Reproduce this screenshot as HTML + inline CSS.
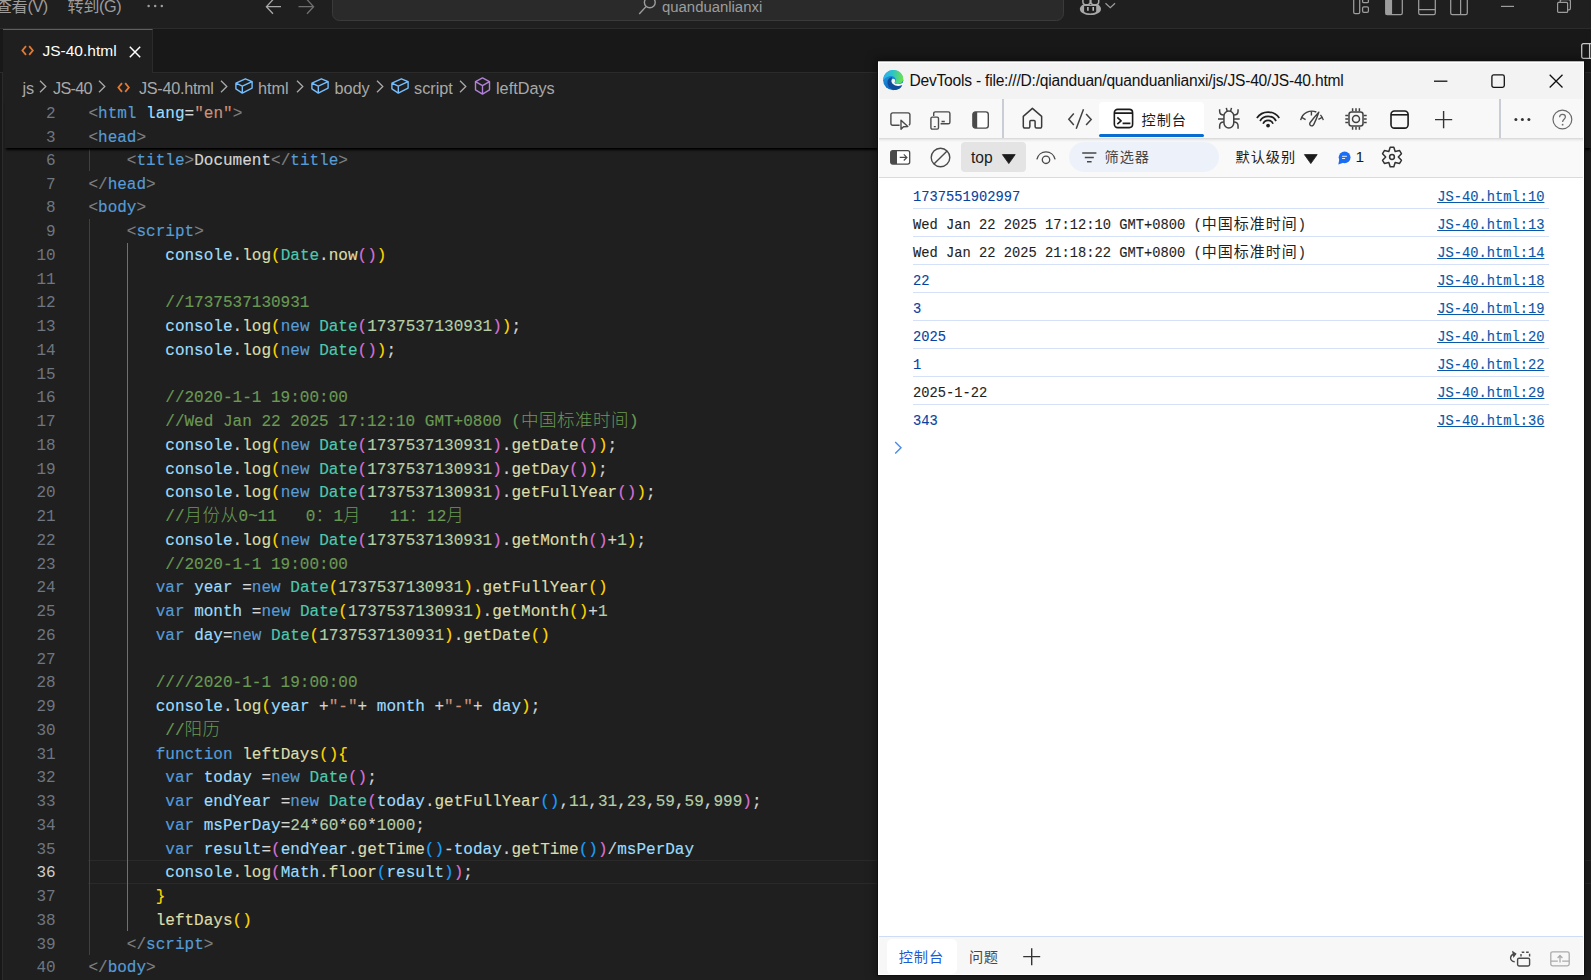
<!DOCTYPE html>
<html lang="zh-CN">
<head>
<meta charset="utf-8">
<title>JS-40.html - quanduanlianxi</title>
<style>
*{box-sizing:border-box;margin:0;padding:0}
html,body{width:1591px;height:980px;overflow:hidden;background:#1f1f1f}
body{position:relative;font-family:"Liberation Sans","Noto Sans CJK SC",sans-serif;color:#ccc}
.a{position:absolute;white-space:pre}
svg{position:absolute;overflow:visible}
/* ---------- VS Code ---------- */
#title{position:absolute;left:0;top:0;width:1591px;height:29px;background:#1f1f1f;border-bottom:1px solid #2b2b2b}
#title .menu{position:absolute;top:-4.6px;font-size:16.25px;line-height:22px;color:#9d9d9d;white-space:pre}
#cc{position:absolute;left:332px;top:-8px;width:732px;height:28.5px;border:1px solid #3a3a3a;border-radius:7.5px;background:#2a2a2a}
#tabs{position:absolute;left:0;top:29px;width:1591px;height:44px;background:#181818;border-bottom:1px solid #2b2b2b}
#side{position:absolute;left:0;top:29px;width:3px;height:951px;background:#181818;border-right:1px solid #2b2b2b}
#tab{position:absolute;left:3px;top:29px;width:149.5px;height:44px;background:#1f1f1f;border-top:1.4px solid #0078d4;border-right:1px solid #2b2b2b}
#crumbs{position:absolute;left:3px;top:73px;width:1588px;height:27px;background:#1f1f1f}
.bc{position:absolute;top:76.5px;line-height:22px;font-size:16.25px;color:#a9a9a9;white-space:pre}
#editor{position:absolute;left:3px;top:0;width:1588px;height:980px}
.row{position:absolute;left:0;width:1588px;height:23.75px;line-height:23.75px;white-space:pre;font-family:"Liberation Mono","Noto Sans CJK SC",monospace;font-size:16.03px;color:#d4d4d4}
.ln{position:absolute;left:-3px;top:2.2px;width:55.7px;text-align:right;color:#6e7681}
.ln.act{color:#ccc}
.code{position:absolute;left:85.4px;top:2.2px;-webkit-text-stroke:.15px}
.g{color:#808080}.b{color:#569cd6}.v{color:#9cdcfe}.f{color:#dcdcaa}.c{color:#4ec9b0}.n{color:#b5cea8}.s{color:#ce9178}.m{color:#6a9955}
.b1{color:#ffd700}.b2{color:#da70d6}.b3{color:#179fff}
.z{font-family:"Noto Sans CJK SC",sans-serif;font-size:17.5px;letter-spacing:.5px;line-height:0;-webkit-text-stroke:0;font-weight:300}
#sticky{position:absolute;left:2px;top:100px;width:1586px;height:47.6px;background:#1f1f1f;box-shadow:0 3px 2px -1px #000}
#sticky .row{left:-2px;margin-top:1px}
.guide{position:absolute;width:1px;background:#404040}
#curline{position:absolute;left:85px;width:1503px;height:23.75px;border-top:1.5px solid #2a2a2a;border-bottom:1.5px solid #2a2a2a}
/* ---------- DevTools window ---------- */
#dt{position:absolute;left:878px;top:61px;width:706px;height:914px;background:#fff;box-shadow:0 0 0 1px #101010,0 0 9px 3px rgba(0,0,0,.35);color:#1f1f1f;overflow:hidden}
#dt .tb{position:absolute;left:0;top:0;width:706px;height:38px;background:#f3f3f3}
#dt .tool{position:absolute;left:0;top:38px;width:706px;height:39px;background:#f8f8f8}
#dt .tshadow{position:absolute;left:0;top:76.600px;width:706px;height:4.500px;background:linear-gradient(rgba(0,0,0,.15),rgba(0,0,0,.05) 45%,rgba(0,0,0,0))}
#dt .ctool{position:absolute;left:0;top:77px;width:706px;height:40px;background:#f9f9f9;border-bottom:1.4px solid #cfdcf6}
#dt .sep{position:absolute;top:38px;width:2px;height:39px;background:#c9ced6}
.msg{position:absolute;left:35px;width:636px;height:28px;border-bottom:1.3px solid #d5e1f8;font-family:"Liberation Mono","Noto Sans CJK SC",monospace;font-size:13.75px;line-height:28px;white-space:pre;-webkit-text-stroke:.12px}
.msg .t{position:absolute;left:0;top:3px}
.msg .num{color:#0842a0}
.msg a{position:absolute;right:4.6px;top:3px;color:#0b57a8;text-decoration:underline;text-underline-offset:.8px}
.msg .zz{font-family:"Noto Sans CJK SC",sans-serif;font-size:15px;letter-spacing:1px;font-weight:400;line-height:0;-webkit-text-stroke:0}
#dt .frame{position:absolute;left:0;top:0;width:706px;height:914px;box-shadow:inset 0 0 0 1px #fff;border-top:1px solid #b4b4b4}
#drawer{position:absolute;left:0;top:875px;width:706px;height:39px;background:#f7f7f7;border-top:1.4px solid #cfdcf6}
</style>
</head>
<body>
<!-- editor body -->
<div id="editor">
<div id="curline" style="top:860.1px"></div>
<div class="guide" style="left:85.5px;top:147.6px;height:23.75px"></div>
<div class="guide" style="left:85.5px;top:218.85px;height:736.25px"></div>
<div class="guide" style="left:123.5px;top:242.6px;height:688.75px;background:#707070"></div>
<div class="row" style="top:147.60px"><span class="ln">6</span><span class="code">    <span class="g">&lt;</span><span class="b">title</span><span class="g">&gt;</span><span class="p">Document</span><span class="g">&lt;/</span><span class="b">title</span><span class="g">&gt;</span></span></div>
<div class="row" style="top:171.35px"><span class="ln">7</span><span class="code"><span class="g">&lt;/</span><span class="b">head</span><span class="g">&gt;</span></span></div>
<div class="row" style="top:195.10px"><span class="ln">8</span><span class="code"><span class="g">&lt;</span><span class="b">body</span><span class="g">&gt;</span></span></div>
<div class="row" style="top:218.85px"><span class="ln">9</span><span class="code">    <span class="g">&lt;</span><span class="b">script</span><span class="g">&gt;</span></span></div>
<div class="row" style="top:242.60px"><span class="ln">10</span><span class="code">        <span class="v">console</span><span class="p">.</span><span class="f">log</span><span class="b1">(</span><span class="c">Date</span><span class="p">.</span><span class="f">now</span><span class="b2">(</span><span class="b2">)</span><span class="b1">)</span></span></div>
<div class="row" style="top:266.35px"><span class="ln">11</span><span class="code"></span></div>
<div class="row" style="top:290.10px"><span class="ln">12</span><span class="code">        <span class="m">//1737537130931</span></span></div>
<div class="row" style="top:313.85px"><span class="ln">13</span><span class="code">        <span class="v">console</span><span class="p">.</span><span class="f">log</span><span class="b1">(</span><span class="b">new</span> <span class="c">Date</span><span class="b2">(</span><span class="n">1737537130931</span><span class="b2">)</span><span class="b1">)</span><span class="p">;</span></span></div>
<div class="row" style="top:337.60px"><span class="ln">14</span><span class="code">        <span class="v">console</span><span class="p">.</span><span class="f">log</span><span class="b1">(</span><span class="b">new</span> <span class="c">Date</span><span class="b2">(</span><span class="b2">)</span><span class="b1">)</span><span class="p">;</span></span></div>
<div class="row" style="top:361.35px"><span class="ln">15</span><span class="code"></span></div>
<div class="row" style="top:385.10px"><span class="ln">16</span><span class="code">        <span class="m">//2020-1-1 19:00:00</span></span></div>
<div class="row" style="top:408.85px"><span class="ln">17</span><span class="code">        <span class="m">//Wed Jan 22 2025 17:12:10 GMT+0800 (</span><span class="m z">中国标准时间</span><span class="m">)</span></span></div>
<div class="row" style="top:432.60px"><span class="ln">18</span><span class="code">        <span class="v">console</span><span class="p">.</span><span class="f">log</span><span class="b1">(</span><span class="b">new</span> <span class="c">Date</span><span class="b2">(</span><span class="n">1737537130931</span><span class="b2">)</span><span class="p">.</span><span class="f">getDate</span><span class="b2">(</span><span class="b2">)</span><span class="b1">)</span><span class="p">;</span></span></div>
<div class="row" style="top:456.35px"><span class="ln">19</span><span class="code">        <span class="v">console</span><span class="p">.</span><span class="f">log</span><span class="b1">(</span><span class="b">new</span> <span class="c">Date</span><span class="b2">(</span><span class="n">1737537130931</span><span class="b2">)</span><span class="p">.</span><span class="f">getDay</span><span class="b2">(</span><span class="b2">)</span><span class="b1">)</span><span class="p">;</span></span></div>
<div class="row" style="top:480.10px"><span class="ln">20</span><span class="code">        <span class="v">console</span><span class="p">.</span><span class="f">log</span><span class="b1">(</span><span class="b">new</span> <span class="c">Date</span><span class="b2">(</span><span class="n">1737537130931</span><span class="b2">)</span><span class="p">.</span><span class="f">getFullYear</span><span class="b2">(</span><span class="b2">)</span><span class="b1">)</span><span class="p">;</span></span></div>
<div class="row" style="top:503.85px"><span class="ln">21</span><span class="code">        <span class="m">//</span><span class="m z">月份从</span><span class="m">0~11   0</span><span class="m z">：</span><span class="m">1</span><span class="m z">月</span><span class="m">   11</span><span class="m z">：</span><span class="m">12</span><span class="m z">月</span></span></div>
<div class="row" style="top:527.60px"><span class="ln">22</span><span class="code">        <span class="v">console</span><span class="p">.</span><span class="f">log</span><span class="b1">(</span><span class="b">new</span> <span class="c">Date</span><span class="b2">(</span><span class="n">1737537130931</span><span class="b2">)</span><span class="p">.</span><span class="f">getMonth</span><span class="b2">(</span><span class="b2">)</span><span class="p">+</span><span class="n">1</span><span class="b1">)</span><span class="p">;</span></span></div>
<div class="row" style="top:551.35px"><span class="ln">23</span><span class="code">        <span class="m">//2020-1-1 19:00:00</span></span></div>
<div class="row" style="top:575.10px"><span class="ln">24</span><span class="code">       <span class="b">var</span> <span class="v">year</span><span class="p"> =</span><span class="b">new</span> <span class="c">Date</span><span class="b1">(</span><span class="n">1737537130931</span><span class="b1">)</span><span class="p">.</span><span class="f">getFullYear</span><span class="b1">(</span><span class="b1">)</span></span></div>
<div class="row" style="top:598.85px"><span class="ln">25</span><span class="code">       <span class="b">var</span> <span class="v">month</span><span class="p"> =</span><span class="b">new</span> <span class="c">Date</span><span class="b1">(</span><span class="n">1737537130931</span><span class="b1">)</span><span class="p">.</span><span class="f">getMonth</span><span class="b1">(</span><span class="b1">)</span><span class="p">+</span><span class="n">1</span></span></div>
<div class="row" style="top:622.60px"><span class="ln">26</span><span class="code">       <span class="b">var</span> <span class="v">day</span><span class="p">=</span><span class="b">new</span> <span class="c">Date</span><span class="b1">(</span><span class="n">1737537130931</span><span class="b1">)</span><span class="p">.</span><span class="f">getDate</span><span class="b1">(</span><span class="b1">)</span></span></div>
<div class="row" style="top:646.35px"><span class="ln">27</span><span class="code"></span></div>
<div class="row" style="top:670.10px"><span class="ln">28</span><span class="code">       <span class="m">////2020-1-1 19:00:00</span></span></div>
<div class="row" style="top:693.85px"><span class="ln">29</span><span class="code">       <span class="v">console</span><span class="p">.</span><span class="f">log</span><span class="b1">(</span><span class="v">year</span><span class="p"> +</span><span class="s">"-"</span><span class="p">+ </span><span class="v">month</span><span class="p"> +</span><span class="s">"-"</span><span class="p">+ </span><span class="v">day</span><span class="b1">)</span><span class="p">;</span></span></div>
<div class="row" style="top:717.60px"><span class="ln">30</span><span class="code">        <span class="m">//</span><span class="m z">阳历</span></span></div>
<div class="row" style="top:741.35px"><span class="ln">31</span><span class="code">       <span class="b">function</span> <span class="f">leftDays</span><span class="b1">(</span><span class="b1">)</span><span class="b1">{</span></span></div>
<div class="row" style="top:765.10px"><span class="ln">32</span><span class="code">        <span class="b">var</span> <span class="v">today</span><span class="p"> =</span><span class="b">new</span> <span class="c">Date</span><span class="b2">(</span><span class="b2">)</span><span class="p">;</span></span></div>
<div class="row" style="top:788.85px"><span class="ln">33</span><span class="code">        <span class="b">var</span> <span class="v">endYear</span><span class="p"> =</span><span class="b">new</span> <span class="c">Date</span><span class="b2">(</span><span class="v">today</span><span class="p">.</span><span class="f">getFullYear</span><span class="b3">(</span><span class="b3">)</span><span class="p">,</span><span class="n">11</span><span class="p">,</span><span class="n">31</span><span class="p">,</span><span class="n">23</span><span class="p">,</span><span class="n">59</span><span class="p">,</span><span class="n">59</span><span class="p">,</span><span class="n">999</span><span class="b2">)</span><span class="p">;</span></span></div>
<div class="row" style="top:812.60px"><span class="ln">34</span><span class="code">        <span class="b">var</span> <span class="v">msPerDay</span><span class="p">=</span><span class="n">24</span><span class="p">*</span><span class="n">60</span><span class="p">*</span><span class="n">60</span><span class="p">*</span><span class="n">1000</span><span class="p">;</span></span></div>
<div class="row" style="top:836.35px"><span class="ln">35</span><span class="code">        <span class="b">var</span> <span class="v">result</span><span class="p">=</span><span class="b2">(</span><span class="v">endYear</span><span class="p">.</span><span class="f">getTime</span><span class="b3">(</span><span class="b3">)</span><span class="p">-</span><span class="v">today</span><span class="p">.</span><span class="f">getTime</span><span class="b3">(</span><span class="b3">)</span><span class="b2">)</span><span class="p">/</span><span class="v">msPerDay</span></span></div>
<div class="row" style="top:860.10px"><span class="ln act">36</span><span class="code">        <span class="v">console</span><span class="p">.</span><span class="f">log</span><span class="b2">(</span><span class="v">Math</span><span class="p">.</span><span class="f">floor</span><span class="b3">(</span><span class="v">result</span><span class="b3">)</span><span class="b2">)</span><span class="p">;</span></span></div>
<div class="row" style="top:883.85px"><span class="ln">37</span><span class="code">       <span class="b1">}</span></span></div>
<div class="row" style="top:907.60px"><span class="ln">38</span><span class="code">       <span class="f">leftDays</span><span class="b1">(</span><span class="b1">)</span></span></div>
<div class="row" style="top:931.35px"><span class="ln">39</span><span class="code">    <span class="g">&lt;/</span><span class="b">script</span><span class="g">&gt;</span></span></div>
<div class="row" style="top:955.10px"><span class="ln">40</span><span class="code"><span class="g">&lt;/</span><span class="b">body</span><span class="g">&gt;</span></span></div>
<div id="sticky">
<div class="row" style="top:0.00px"><span class="ln">2</span><span class="code"><span class="g">&lt;</span><span class="b">html</span> <span class="v">lang</span><span class="p">=</span><span class="s">"en"</span><span class="g">&gt;</span></span></div>
<div class="row" style="top:23.75px"><span class="ln">3</span><span class="code"><span class="g">&lt;</span><span class="b">head</span><span class="g">&gt;</span></span></div>
</div>
</div>
<div id="side"></div>
<!-- title bar -->
<div id="title">
<span class="menu" style="left:-4.300px;letter-spacing:-.4px">查看(V)</span>
<span class="menu" style="left:67.400px;letter-spacing:-.4px">转到(G)</span>
<svg style="left:146px;top:3px" width="20" height="6" viewBox="0 0 20 6"><g fill="#9d9d9d"><circle cx="2.6" cy="3" r="1.25"/><circle cx="9.2" cy="3" r="1.25"/><circle cx="15.8" cy="3" r="1.25"/></g></svg>
<svg style="left:265px;top:-2px" width="18" height="18" viewBox="0 0 18 18" fill="none" stroke="#a8a8a8" stroke-width="1.3"><path d="M16 8.7H1.6M8 1.6L1.4 8.7 8 15.8"/></svg>
<svg style="left:297px;top:-2px" width="18" height="18" viewBox="0 0 18 18" fill="none" stroke="#707070" stroke-width="1.3"><path d="M1.5 8.7H16.2M10 1.6l6.6 7.1-6.6 7.1"/></svg>
<div id="cc"></div>
<svg style="left:638px;top:-3.700px" width="19" height="19" viewBox="0 0 19 19" fill="none" stroke="#9d9d9d" stroke-width="1.4"><circle cx="11.8" cy="6.4" r="5.4"/><path d="M8 10.6L1.2 18"/></svg>
<span class="a" style="left:662px;top:-4.1px;font-size:14.9px;line-height:22px;color:#9d9d9d">quanduanlianxi</span>
<!-- copilot -->
<svg style="left:1060px;top:0" width="80" height="30" viewBox="0 0 80 30">
<path d="M22.600 4.800C21 6 19.850 7.500 19.850 9c0 3.500 4.650 6.100 10.550 6.100S41 12.500 41 9c0-1.500-1.200-3-2.300-4.200z" fill="#a8a8a8"/>
<path d="M24.100 6h12.100v5.600c0 .8-2.700 1.800-6 1.800-3.400 0-6.100-1-6.100-1.800z" fill="#1f1f1f"/>
<path d="M22.900-1v3c0 1.800 1.600 2.800 3.600 2.800s3.700-1 3.700-2.800v-3M30.900-1v3c0 1.800 1.700 2.800 3.900 2.800s3.900-1 3.900-2.800v-3" fill="none" stroke="#a8a8a8" stroke-width="1.500"/>
<path d="M27.900 7v3.800M33.200 7v3.800" stroke="#c4c4c4" stroke-width="1.500"/>
<path d="M45.500 3.300l4.800 4.500 4.750-4.500" fill="none" stroke="#9d9d9d" stroke-width="1.200"/>
</svg>
<!-- layout icons -->
<svg style="left:1353px;top:-4.500px" width="18" height="19" viewBox="0 0 18 19" fill="none" stroke="#9d9d9d" stroke-width="1.25"><rect x=".7" y=".7" width="6" height="17" rx="1.4"/><rect x="9.600" y="1.700" width="5.800" height="5" rx="1.300"/><rect x="9.600" y="10.800" width="5.800" height="5.600" rx="1.300"/></svg>
<svg style="left:1385px;top:-3.400px" width="18" height="19" viewBox="0 0 18 19"><rect x=".7" y=".7" width="16.600" height="17" rx="1.600" fill="none" stroke="#9d9d9d" stroke-width="1.25"/><rect x=".7" y=".7" width="6.400" height="17" fill="#9d9d9d"/></svg>
<svg style="left:1417.500px;top:-3.400px" width="18" height="19" viewBox="0 0 18 19" fill="none" stroke="#9d9d9d" stroke-width="1.25"><rect x=".7" y=".7" width="16.600" height="17" rx="1.600"/><path d="M.7 12.600h16.600"/></svg>
<svg style="left:1450px;top:-3.400px" width="18" height="19" viewBox="0 0 18 19" fill="none" stroke="#9d9d9d" stroke-width="1.25"><rect x=".7" y=".7" width="16.600" height="17" rx="1.600"/><path d="M10.600.7v17"/></svg>
<svg style="left:1501px;top:5px" width="14" height="3" viewBox="0 0 14 3"><path d="M0 1.400h13" stroke="#9d9d9d" stroke-width="1.2"/></svg>
<svg style="left:1556.500px;top:-1px" width="14" height="14" viewBox="0 0 14 14" fill="none" stroke="#9d9d9d" stroke-width="1.2"><rect x=".6" y="3.400" width="10" height="10" rx="1"/><path d="M3.200 3.200V2.200c0-1 .6-1.600 1.600-1.600h7c1 0 1.600.6 1.600 1.600v7c0 1-.6 1.600-1.600 1.600h-1"/></svg>
</div>
<!-- tabs -->
<div id="tabs"></div>
<div id="tab">
<svg style="left:17.700px;top:14.800px" width="14" height="12" viewBox="0 0 14 12" fill="none" stroke="#e37933" stroke-width="1.800"><path d="M5 1.200L1.400 5.500 5 9.800M8.200 1.200l3.600 4.300-3.600 4.300"/></svg>
<span class="a" style="left:39.500px;top:9.500px;font-size:15.500px;line-height:22px;color:#fff">JS-40.html</span>
<svg style="left:126px;top:15.500px" width="12" height="12" viewBox="0 0 12 12" fill="none" stroke="#fff" stroke-width="1.500"><path d="M.8.8l10.400 10.400M11.200.8L.8 11.200"/></svg>
</div>
<svg style="left:1581px;top:42.500px" width="18" height="16" viewBox="0 0 18 16" fill="none" stroke="#c5c5c5" stroke-width="1.300"><rect x=".7" y=".7" width="16.600" height="14.600" rx="1.600"/><path d="M8.600.7v14.600"/></svg>
<!-- breadcrumbs -->
<div id="crumbs"></div>
<span class="bc" style="left:22.5px">js</span>
<svg class="chev" style="left:39.400px;top:80px" width="8" height="13" viewBox="0 0 8 13" fill="none" stroke="#a9a9a9" stroke-width="1.3"><path d="M1 .8l5.800 5.700L1 12.200"/></svg>
<span class="bc" style="left:53px;letter-spacing:-.7px">JS-40</span>
<svg class="chev" style="left:98.100px;top:80px" width="8" height="13" viewBox="0 0 8 13" fill="none" stroke="#a9a9a9" stroke-width="1.3"><path d="M1 .8l5.800 5.700L1 12.200"/></svg>
<svg style="left:117.200px;top:82.300px" width="14" height="12" viewBox="0 0 14 12" fill="none" stroke="#e37933" stroke-width="1.800"><path d="M5 1.200L1.400 5.500 5 9.800M8.200 1.200l3.600 4.300-3.600 4.300"/></svg>
<span class="bc" style="left:139px;letter-spacing:-.3px">JS-40.html</span>
<svg class="chev" style="left:220.3px;top:80px" width="8" height="13" viewBox="0 0 8 13" fill="none" stroke="#a9a9a9" stroke-width="1.3"><path d="M1 .8l5.800 5.700L1 12.200"/></svg>
<svg style="left:235px;top:78px" width="18" height="16" viewBox="0 0 18 16" fill="none" stroke="#75beff" stroke-width="1.4" stroke-linejoin="round"><path d="M.9 5.200L10.400.8l6.700 2.900L7.300 8.200zM.9 5.200v5.600l6.400 4.300V8.200M7.300 15.100l9.800-5V3.700"/></svg>
<span class="bc" style="left:258px">html</span>
<svg class="chev" style="left:296.3px;top:80px" width="8" height="13" viewBox="0 0 8 13" fill="none" stroke="#a9a9a9" stroke-width="1.3"><path d="M1 .8l5.800 5.700L1 12.200"/></svg>
<svg style="left:311px;top:78px" width="18" height="16" viewBox="0 0 18 16" fill="none" stroke="#75beff" stroke-width="1.4" stroke-linejoin="round"><path d="M.9 5.200L10.400.8l6.700 2.900L7.300 8.200zM.9 5.200v5.600l6.400 4.300V8.200M7.300 15.100l9.800-5V3.700"/></svg>
<span class="bc" style="left:334.500px">body</span>
<svg class="chev" style="left:376.3px;top:80px" width="8" height="13" viewBox="0 0 8 13" fill="none" stroke="#a9a9a9" stroke-width="1.3"><path d="M1 .8l5.800 5.700L1 12.200"/></svg>
<svg style="left:391px;top:78px" width="18" height="16" viewBox="0 0 18 16" fill="none" stroke="#75beff" stroke-width="1.4" stroke-linejoin="round"><path d="M.9 5.200L10.400.8l6.700 2.900L7.300 8.200zM.9 5.200v5.600l6.400 4.300V8.200M7.300 15.100l9.800-5V3.700"/></svg>
<span class="bc" style="left:414px">script</span>
<svg class="chev" style="left:459.3px;top:80px" width="8" height="13" viewBox="0 0 8 13" fill="none" stroke="#a9a9a9" stroke-width="1.3"><path d="M1 .8l5.800 5.700L1 12.200"/></svg>
<svg style="left:474px;top:77px" width="17" height="18" viewBox="0 0 17 18" fill="none" stroke="#b180d7" stroke-width="1.4" stroke-linejoin="round"><path d="M8.500.9l7 3.700v8.200l-7 4.300-7-4.300V4.600zM1.500 4.600l7 4 7-4M8.500 8.600v8.500"/></svg>
<span class="bc" style="left:496px">leftDays</span>

<div id="dt">
<div class="tb"></div>
<!-- edge logo -->
<svg style="left:5px;top:8.900px" width="20.400" height="20.400" viewBox="0 0 20 20">
<defs>
<linearGradient id="eg1" x1="0" y1="0" x2=".4" y2="1"><stop offset="0" stop-color="#24a4ea"/><stop offset="1" stop-color="#0f66be"/></linearGradient>
<linearGradient id="eg2" x1="0" y1=".5" x2="1" y2=".55"><stop offset="0" stop-color="#2aaef0"/><stop offset=".45" stop-color="#2bc4c6"/><stop offset="1" stop-color="#70e248"/></linearGradient>
</defs>
<circle cx="10" cy="10" r="9.900" fill="url(#eg1)"/>
<path d="M9 7C6.500 7 4.400 9.200 4.400 12c0 4 3.400 7.600 7.600 7.600 2.800 0 5.400-1.800 6.900-4.600-1.300.5-2.700.7-4.100.6-3.600-.2-6.500-2.200-6.500-4.800 0-1.400.3-2.800.700-3.800z" fill="#0d4c9a"/>
<path d="M9.200 8.900c1-.6 2.800.1 2.800 1.600 0 .9-.6 1.300-.6 1.900 0 .8 1.400 1.400 3.400 1.400s4-.6 5.500-1.800v8H18.500l.4-5c-1.300.5-2.700.7-4.100.6-3.600-.2-6.500-2.200-6.500-4.800 0-.8.4-1.500.9-1.900z" fill="#f3f3f3"/>
<path d="M18.900 15c-1.500 2.800-4.100 4.600-6.900 4.600v.6h8.300V14z" fill="#f3f3f3"/>
<path d="M12 19.600c2.800 0 5.400-1.800 6.900-4.600-1.300.5-2.700.7-4.100.6l-2.800 1z" fill="#0d4c9a"/>
<path d="M.1 10.300C.1 4.600 4.600.1 10.200.1c5.800 0 9.700 4.300 9.700 8.600 0 3.300-2.500 5.100-5 5.100-2.100 0-3.300-.8-3.300-1.500 0-.6.900-1 .9-2.500C12.500 7.800 10.600 6 7.800 6 4.200 6 1.300 8.400.1 10.300z" fill="url(#eg2)"/>
</svg>
<span class="a" style="left:31.400px;top:8.500px;font-size:15.600px;letter-spacing:-.215px;line-height:22px;color:#111">DevTools - file:///D:/qianduan/quanduanlianxi/js/JS-40/JS-40.html</span>
<svg style="left:555.500px;top:18.500px" width="14" height="3" viewBox="0 0 14 3"><path d="M0 1.200h13.400" stroke="#111" stroke-width="1.300"/></svg>
<svg style="left:612.500px;top:12.500px" width="15" height="15" viewBox="0 0 15 15" fill="none" stroke="#111" stroke-width="1.300"><rect x=".9" y=".9" width="12.400" height="12.400" rx="1.800"/></svg>
<svg style="left:670.500px;top:12.500px" width="15" height="15" viewBox="0 0 15 15" fill="none" stroke="#111" stroke-width="1.300"><path d="M.7.700l12.800 12.800M13.500.7L.7 13.500"/></svg>

<div class="tool"></div>
<div class="sep" style="left:124.200px"></div>
<div class="sep" style="left:621px"></div>
<!-- console tab -->
<div class="a" style="left:221px;top:40.800px;width:105px;height:35.200px;background:#fff;border-radius:4px 4px 2px 2px"></div>
<div class="a" style="left:221px;top:72.800px;width:105px;height:3.200px;background:#0a6cce;border-radius:2px"></div>
<span class="a" style="left:263.5px;top:47.700px;font-size:14.200px;line-height:22px;color:#1b1b1b;letter-spacing:.95px">控制台</span>

<!-- inspect -->
<svg style="left:12px;top:50.500px" width="21" height="18" viewBox="0 0 21 18" fill="none" stroke="#4a4a4a" stroke-width="1.400" stroke-linejoin="round"><path d="M9.600 13.300H2.600A1.700 1.700 0 0 1 .9 11.600V2.600A1.700 1.700 0 0 1 2.600.9h15.600a1.700 1.700 0 0 1 1.700 1.700v8.800c0 .8-.4 1.400-1.100 1.700"/><path d="M11 8.200v9l2.500-2.400 4.300-.2z"/></svg>
<!-- device -->
<svg style="left:52px;top:49.500px" width="21" height="19" viewBox="0 0 21 19" fill="none" stroke="#4a4a4a" stroke-width="1.400" stroke-linejoin="round"><path d="M3.700 5V2.500A1.600 1.600 0 0 1 5.300.9h13A1.600 1.600 0 0 1 19.900 2.500v8.700a1.600 1.600 0 0 1-1.600 1.600h-7.700"/><rect x=".9" y="6.100" width="7.600" height="12" rx="1.300"/><path d="M3.800 15.600h2M11.500 10.500h3.300"/></svg>
<!-- dock side -->
<svg style="left:93.500px;top:49.500px" width="18" height="18" viewBox="0 0 18 18"><rect x=".9" y=".9" width="15.400" height="16.200" rx="2.600" fill="#fff" stroke="#4a4a4a" stroke-width="1.400"/><path d="M3.300.9h1.900v16.200H3.300A2.400 2.400 0 0 1 .9 14.700V3.300A2.400 2.400 0 0 1 3.300.9z" fill="#4a4a4a"/></svg>
<!-- home -->
<svg style="left:143.500px;top:46px" width="21" height="22" viewBox="0 0 21 22" fill="none" stroke="#3a3a3a" stroke-width="1.500" stroke-linejoin="round"><path d="M1.300 9.400L10.400 1.400l9.250 8v10.200a1.500 1.500 0 0 1-1.500 1.500H14.600a1.500 1.500 0 0 1-1.500-1.500V14.600a1 1 0 0 0-1-1H8.850a1 1 0 0 0-1 1v5a1.500 1.500 0 0 1-1.500 1.500H2.800a1.500 1.500 0 0 1-1.500-1.500z"/></svg>
<!-- elements </> -->
<svg style="left:182px;top:39px" width="40" height="32" viewBox="0 0 40 32" fill="none" stroke="#424242" stroke-width="1.500"><path d="M13.800 13.600L8.800 19.300l5 5.700M23.500 9.300L16.200 28.800M26.100 13.900l5.100 5.600-5.100 5.600"/></svg>
<!-- console icon -->
<svg style="left:234.900px;top:47.100px" width="21" height="21" viewBox="0 0 21 21" fill="none" stroke="#1b1b1b" stroke-width="1.600" stroke-linejoin="round"><rect x="1.350" y="1.350" width="18.250" height="18.250" rx="3.300"/><path d="M1.350 5.100h18.250M4.300 9.350l3.800 3.550-3.800 3.200M9.600 15.400h7.800"/></svg>
<!-- bug -->
<svg style="left:339px;top:46px" width="24" height="24" viewBox="0 0 24 24" fill="none" stroke="#424242" stroke-width="1.500" stroke-linecap="butt"><rect x="6.950" y="4.100" width="9.800" height="16.900" rx="4.900"/><path d="M6.900 8.100C4.400 8.100 2.650 6.600 2.650 4.300V2.300M16.800 8.100c2.500 0 4.250-1.500 4.250-3.800V2.300M1 12h5.900M16.800 12h5.900M6.900 15.100c-2.500 0-4.250 1.700-4.250 4V21.700M16.800 15.100c2.500 0 4.250 1.700 4.250 4V21.700M10.200 4.200L9.300.9M13.600 4.200l.9-3.300"/></svg>
<!-- wifi -->
<svg style="left:378px;top:49px" width="24" height="20" viewBox="0 0 24 20" fill="none" stroke="#1f1f1f" stroke-width="1.700"><path d="M0.88 8.05A13.5 13.5 0 0 1 23.26 8.05M4.02 10.95A9.3 9.3 0 0 1 20.12 10.95M7.09 13.79A5.3 5.3 0 0 1 17.05 13.79"/><circle cx="12.07" cy="15.6" r="1.900" fill="#1f1f1f" stroke="none"/></svg>
<!-- gauge -->
<svg style="left:421px;top:47px" width="26" height="22" viewBox="0 0 26 22" fill="none" stroke="#424242" stroke-width="1.400"><path d="M1.67 12.17A11.6 11.6 0 0 1 17.32 4.02M21.45 6.87A11.6 11.6 0 0 1 24.27 12.17"/><path d="M12.400 3.300v4.300M2.600 9.300l4 2.300M23.200 9.300l-3.800 2.100"/><path d="M19.800 4.200c-3 3.300-7 8.100-8.600 10.300-.9 1.300-.5 2.500.6 3.100 1.100.6 2.300.2 3-1.200 1.200-2.400 3.600-8 5-12.200z" stroke-linejoin="round"/></svg>
<!-- cpu -->
<svg style="left:465.750px;top:46px" width="24" height="24" viewBox="0 0 24 24" fill="none" stroke="#424242" stroke-width="1.500"><rect x="5.00" y="5.00" width="14" height="14" rx="2.500"/><circle cx="12" cy="12" r="3.500"/><path d="M8.6 1.30v3M8.6 19.70v3M1.30 8.6h3M19.70 8.6h3M12 1.30v3M12 19.70v3M1.30 12h3M19.70 12h3M15.4 1.30v3M15.4 19.70v3M1.30 15.4h3M19.70 15.4h3"/></svg>
<!-- application -->
<svg style="left:511.500px;top:48.500px" width="20" height="20" viewBox="0 0 20 20" fill="none" stroke="#1b1b1b" stroke-width="1.600"><rect x="1" y="1" width="17.100" height="17.100" rx="3.400"/><path d="M1 4.800h17.100"/></svg>
<!-- plus -->
<svg style="left:557px;top:50px" width="18" height="18" viewBox="0 0 18 18" fill="none" stroke="#333" stroke-width="1.400"><path d="M0 8.600h17.200M8.600 0v17.200"/></svg>
<!-- more -->
<svg style="left:636px;top:56px" width="18" height="6" viewBox="0 0 18 6" fill="#333"><circle cx="1.900" cy="2.600" r="1.500"/><circle cx="8.400" cy="2.600" r="1.500"/><circle cx="14.900" cy="2.600" r="1.500"/></svg>
<!-- help -->
<svg style="left:674px;top:48px" width="21" height="21" viewBox="0 0 21 21" fill="none" stroke="#6a6a6a" stroke-width="1.200"><circle cx="10.400" cy="10.500" r="9.400"/><path d="M7.600 8.300c0-1.700 1.200-2.900 2.900-2.900s2.900 1.100 2.900 2.600c0 2.100-2.800 2.400-2.800 4.900"/><circle cx="10.600" cy="15.700" r=".9" fill="#6a6a6a" stroke="none"/></svg>


<div class="ctool"></div>
<div class="tshadow"></div>
<!-- top dropdown -->
<div class="a" style="left:83px;top:81px;width:65px;height:30px;background:#e4e4e4;border-radius:4px"></div>
<span class="a" style="left:93px;top:86.300px;font-size:15.600px;line-height:22px;color:#1b1b1b">top</span>
<svg style="left:124px;top:92.500px" width="14" height="10" viewBox="0 0 14 10"><path d="M.4.600h12.800L6.800 9.600z" fill="#1b1b1b" stroke="#1b1b1b" stroke-width=".8" stroke-linejoin="round"/></svg>
<!-- filter pill -->
<div class="a" style="left:191px;top:80.600px;width:150px;height:30.500px;background:#edf2fa;border-radius:15.500px"></div>
<svg style="left:204px;top:91px" width="15" height="11" viewBox="0 0 15 11" fill="none" stroke="#474747" stroke-width="1.500"><path d="M.2 1h14.200M2.800 5.400h9M5 9.800h4.600"/></svg>
<span class="a" style="left:226.5px;top:85.300px;font-size:14.200px;line-height:22px;color:#474747;letter-spacing:.95px">筛选器</span>
<span class="a" style="left:357.500px;top:85.300px;font-size:14.200px;line-height:22px;color:#1b1b1b;letter-spacing:.95px">默认级别</span>
<svg style="left:426px;top:92.500px" width="14" height="10" viewBox="0 0 14 10"><path d="M.4.600h12.800L6.800 9.600z" fill="#1b1b1b" stroke="#1b1b1b" stroke-width=".8" stroke-linejoin="round"/></svg>
<svg style="left:459px;top:89px" width="15" height="15" viewBox="0 0 15 15"><circle cx="7.600" cy="7.300" r="5.900" fill="#1b6ef3"/><path d="M2.300 9.600L1.300 14.400l5-1.700z" fill="#1b6ef3"/><path d="M5.100 6.300h4.800M5.100 8.500h3" stroke="#fff" stroke-width=".9"/></svg>
<span class="a" style="left:477.500px;top:84.500px;font-size:15.500px;line-height:22px;color:#1b1b1b">1</span>

<!-- sidebar toggle -->
<svg style="left:12.300px;top:89px" width="21" height="15" viewBox="0 0 21 15"><rect x=".7" y=".7" width="19" height="13.400" rx="2" fill="#fff" stroke="#4a4a4a" stroke-width="1.300"/><path d="M2.700.7h4.300v13.400H2.700A2 2 0 0 1 .7 12.100V2.700A2 2 0 0 1 2.700.7z" fill="#4a4a4a"/><path d="M9.700 7.400h7M13.800 4.300l3.100 3.100-3.100 3.100" fill="none" stroke="#4a4a4a" stroke-width="1.200"/></svg>
<!-- clear -->
<svg style="left:52px;top:86px" width="21" height="21" viewBox="0 0 21 21" fill="none" stroke="#4a4a4a" stroke-width="1.400"><circle cx="10.500" cy="10.500" r="9.300"/><path d="M17.100 3.900L3.900 17.100"/></svg>
<!-- eye -->
<svg style="left:157.500px;top:89.800px" width="20" height="14.300" viewBox="0 0 21 15" fill="none" stroke="#4a4a4a" stroke-width="1.400"><path d="M.9 8.800C2 4 6 1 10.500 1s8.500 3 9.600 7.800"/><circle cx="10.500" cy="9.200" r="3.900"/></svg>
<!-- gear -->
<svg style="left:501.900px;top:84.200px" width="24" height="24" viewBox="0 0 24 24" fill="none" stroke="#333" stroke-width="1.500" stroke-linejoin="round"><path d="M13.82 2.17L10.18 2.17L8.85 6.54L4.40 5.51L2.57 8.66L5.70 12.00L2.57 15.34L4.40 18.49L8.85 17.46L10.18 21.83L13.82 21.83L15.15 17.46L19.60 18.49L21.43 15.34L18.30 12.00L21.43 8.66L19.60 5.51L15.15 6.54z"/><circle cx="12" cy="12" r="2.400"/></svg>


<!-- messages -->
<div class="msg" style="top:120.1px"><span class="t num">1737551902997</span><a>JS-40.html:10</a></div>
<div class="msg" style="top:148.1px"><span class="t ">Wed Jan 22 2025 17:12:10 GMT+0800 (<span class="zz">中国标准时间</span>)</span><a>JS-40.html:13</a></div>
<div class="msg" style="top:176.1px"><span class="t ">Wed Jan 22 2025 21:18:22 GMT+0800 (<span class="zz">中国标准时间</span>)</span><a>JS-40.html:14</a></div>
<div class="msg" style="top:204.1px"><span class="t num">22</span><a>JS-40.html:18</a></div>
<div class="msg" style="top:232.1px"><span class="t num">3</span><a>JS-40.html:19</a></div>
<div class="msg" style="top:260.1px"><span class="t num">2025</span><a>JS-40.html:20</a></div>
<div class="msg" style="top:288.1px"><span class="t num">1</span><a>JS-40.html:22</a></div>
<div class="msg" style="top:316.1px"><span class="t ">2025-1-22</span><a>JS-40.html:29</a></div>
<div class="msg" style="top:344.1px;border-bottom-color:transparent"><span class="t num">343</span><a>JS-40.html:36</a></div>
<svg style="left:15.500px;top:379.500px" width="9" height="14" viewBox="0 0 9 14" fill="none" stroke="#4a8af0" stroke-width="1.400"><path d="M1.200 1l5.800 5.800L1.200 12.600"/></svg>

<div id="drawer"></div>
<div class="a" style="left:9px;top:878px;width:70px;height:35px;background:#fff;border-radius:5px"></div>
<span class="a" style="left:20.700px;top:884.800px;font-size:14.200px;line-height:22px;color:#1a5cd6;letter-spacing:.95px">控制台</span>
<span class="a" style="left:91.100px;top:884.800px;font-size:14.200px;line-height:22px;color:#474747;letter-spacing:.5px">问题</span>
<svg style="left:145px;top:887px" width="18" height="18" viewBox="0 0 18 18" fill="none" stroke="#333" stroke-width="1.400"><path d="M.2 8.600h17M8.700.2v17"/></svg>
<svg style="left:630.800px;top:889.500px" width="22" height="16" viewBox="0 0 22 16" fill="none" stroke="#4a4a4a" stroke-width="1.400"><rect x="8.600" y="7.200" width="12" height="7.800" rx="1.400"/><path d="M12 5.600V2.800c0-1 .6-1.600 1.600-1.600h5.400c1 0 1.600.6 1.600 1.600v2.800" stroke-dasharray="2.600 1.800"/><path d="M5.700 10.800C2.900 10.600 1.300 8.700 1.600 6.500 1.900 4.500 3.400 3.300 5.600 3"/><path d="M4 1.200l2.600 1.700L4.800 5.300z" fill="#4a4a4a"/></svg>
<svg style="left:672px;top:889.800px" width="20" height="16" viewBox="0 0 20 16" fill="none" stroke="#ababab" stroke-width="1.300"><rect x=".8" y=".8" width="18.400" height="14" rx="1.800"/><path d="M.8 10.200h7M12.200 10.200h7M10 11.600V4.600M7.600 7l2.400-2.600L12.400 7"/></svg>

<div class="frame"></div>
</div>

</body>
</html>
